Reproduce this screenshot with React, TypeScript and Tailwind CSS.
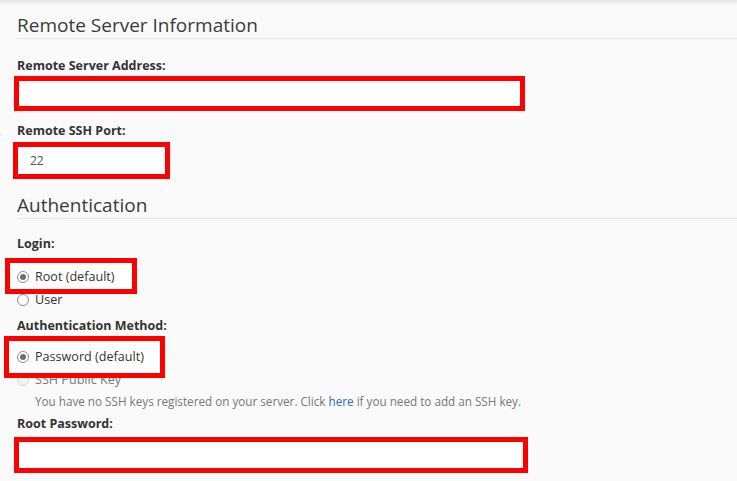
import React from "react"

const font = { fontFamily: '"Open Sans", "Liberation Sans", sans-serif' }

function Radio({ checked = false, disabled = false }: { checked?: boolean; disabled?: boolean }) {
  if (disabled) {
    return <span className="inline-block w-[12px] h-[12px] rounded-full border border-[#d6d6d6] bg-[#f2f2f2]" />
  }
  return (
    <span className="inline-flex items-center justify-center w-[12px] h-[12px] rounded-full border border-[#8c8c8c] bg-white">
      {checked && <span className="w-[6px] h-[6px] rounded-full bg-[#6e6e6e]" />}
    </span>
  )
}

function RadioRow({
  label,
  checked,
  disabled,
  highlight,
}: {
  label: string
  checked?: boolean
  disabled?: boolean
  highlight?: string
}) {
  return (
    <div className="relative h-[23px] flex items-center gap-[6px]">
      {highlight && (
        <div className={`absolute z-[1] bg-white border-[5px] border-[#ff0000] ${highlight}`} />
      )}
      <div className={`flex items-center gap-[6px] ${highlight ? "relative z-[2]" : ""}`}>
        <Radio checked={checked} disabled={disabled} />
        <span className={`text-[12.6px] ${disabled ? "text-[#777]" : "text-[#333]"}`}>{label}</span>
      </div>
    </div>
  )
}

function Label({ children, className = "" }: { children: React.ReactNode; className?: string }) {
  return <div className={`text-[12.5px] leading-[18px] font-bold text-[#333] ${className}`}>{children}</div>
}

function Heading({ children, className = "" }: { children: React.ReactNode; className?: string }) {
  return (
    <h2 className={`pt-[3px] text-[19px] leading-[25px] text-[#3a3a3a] border-b border-[#e3e3e3] ${className}`}>
      {children}
    </h2>
  )
}

export default function App() {
  return (
    <div style={font} className="w-[737px] h-[481px] overflow-hidden bg-[#fafafa]">
      <div className="h-[5px] bg-linear-to-b from-[#e4e4e4] to-[#fafafa]" />
      <div className="pl-[17px]">
        <Heading className="mt-[5px]">Remote Server Information</Heading>

        <Label className="mt-[18px]">Remote Server Address:</Label>
        <input
          type="text"
          className="block mt-[1px] -ml-[3px] w-[511px] h-[35px] bg-white border-[5px] border-[#ff0000] outline-none"
        />

        <Label className="mt-[11px]">Remote SSH Port:</Label>
        <input
          type="text"
          defaultValue="22"
          className="block mt-[2px] -ml-[4px] w-[157px] h-[37px] pl-[12px] text-[12px] text-[#555] bg-white border-[5px] border-[#ff0000] outline-none"
        />

        <Heading className="mt-[11px]">Authentication</Heading>

        <Label className="mt-[16px]">Login:</Label>
        <div className="mt-[13px]">
          <RadioRow label="Root (default)" checked highlight="-left-[12px] w-[132px] -top-[8px] h-[36px]" />
          <RadioRow label="User" />
        </div>

        <Label className="mt-[5px]">Authentication Method:</Label>
        <div className="mt-[11px]">
          <RadioRow label="Password (default)" checked highlight="-left-[13px] w-[161px] -top-[10px] h-[42px]" />
          <RadioRow label="SSH Public Key" disabled />
          <div className="pl-[18px] text-[11.7px] leading-[18px] text-[#777]">
            You have no SSH keys registered on your server. Click{" "}
            <a href="#" className="text-[#2a6ebb]">
              here
            </a>{" "}
            if you need to add an SSH key.
          </div>
        </div>

        <Label className="mt-[5px]">Root Password:</Label>
        <input
          type="password"
          className="block mt-[4px] -ml-[3px] w-[514px] h-[36px] bg-white border-[5px] border-[#ff0000] outline-none"
        />
      </div>
    </div>
  )
}
